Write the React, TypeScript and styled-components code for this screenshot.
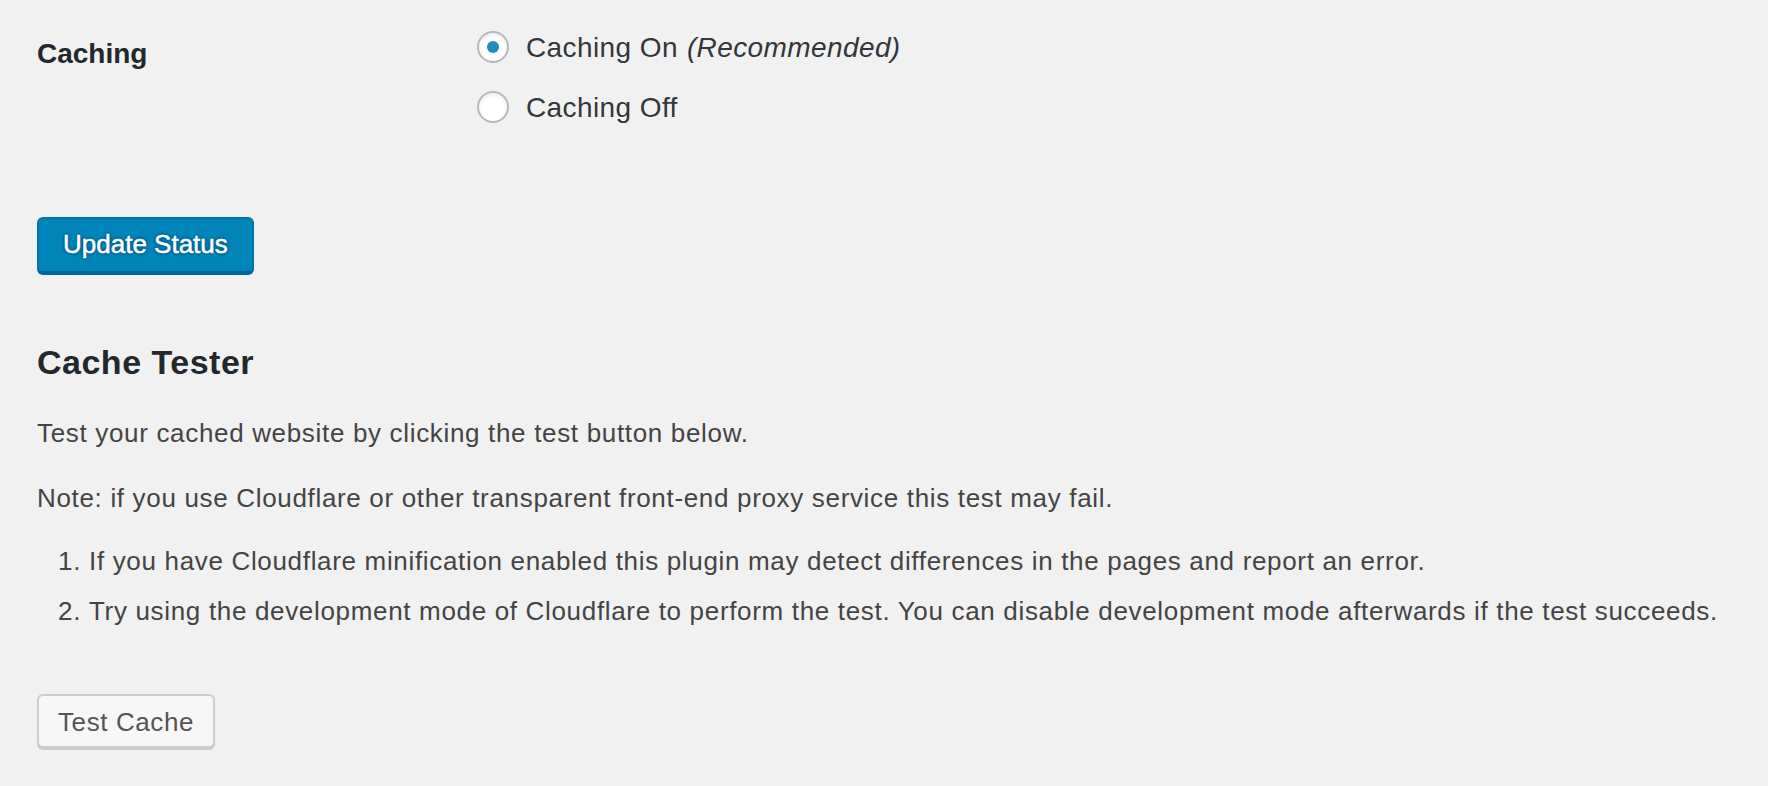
import React, { useState } from 'react';
import styled, { createGlobalStyle } from 'styled-components';

const GlobalStyle = createGlobalStyle`
  html, body {
    margin: 0;
    padding: 0;
    background: #f1f1f1;
  }
  body {
    font-family: 'Liberation Sans', Arial, sans-serif;
    color: #444;
  }
`;

const Page = styled.div`
  padding: 0 37px;
  min-height: 786px;
  box-sizing: border-box;
`;

const FormRow = styled.div`
  display: grid;
  grid-template-columns: 440px 1fr;
  padding-top: 18px;
`;

const RowLabel = styled.div`
  font-size: 28px;
  font-weight: 700;
  line-height: 36px;
  color: #23282d;
  padding-top: 18px;
`;

const OptionList = styled.div`
  display: flex;
  flex-direction: column;
`;

const Option = styled.label`
  display: flex;
  align-items: center;
  height: 60px;
  font-size: 28px;
  line-height: 60px;
  letter-spacing: 0.4px;
  color: #32373c;
  cursor: pointer;

  em {
    margin-left: 9px;
  }
`;

const Radio = styled.input`
  appearance: none;
  box-sizing: border-box;
  width: 32px;
  height: 32px;
  margin: 0 17px 0 0;
  border: 2px solid #b4b9be;
  border-radius: 50%;
  background: #fff;
  box-shadow: inset 0 2px 4px rgba(0, 0, 0, 0.07);
  display: grid;
  place-items: center;
  flex-shrink: 0;
  position: relative;
  top: -1px;

  &:checked::before {
    content: '';
    width: 12px;
    height: 12px;
    border-radius: 50%;
    background: #1e8cbe;
  }
`;

const Button = styled.button<{ $primary?: boolean }>`
  box-sizing: border-box;
  font-family: 'Liberation Sans', Arial, sans-serif;
  font-size: 26px;
  letter-spacing: ${(p) => (p.$primary ? '0' : '0.6px')};
  border-radius: 6px;
  border: 2px solid ${(p) => (p.$primary ? '#0073aa' : '#ccc')};
  border-bottom-color: ${(p) => (p.$primary ? '#006799' : '#ccc')};
  background: ${(p) => (p.$primary ? '#0085ba' : '#f7f7f7')};
  color: ${(p) => (p.$primary ? '#fff' : '#555')};
  text-shadow: ${(p) =>
    p.$primary
      ? '0 -2px 2px #006799, 2px 0 2px #006799, 0 2px 2px #006799, -2px 0 2px #006799'
      : 'none'};
  -webkit-text-stroke: ${(p) => (p.$primary ? '0.5px #fff' : '0')};
  box-shadow: ${(p) => (p.$primary ? '0 2px 0 #006799' : '0 2px 0 #ccc')};
  height: ${(p) => (p.$primary ? '56px' : '54px')};
  line-height: ${(p) => (p.$primary ? '50px' : '46px')};
  padding: ${(p) => (p.$primary ? '0 24px 2px' : '2px 19px 0')};
  cursor: pointer;
  display: block;
`;

const SubmitArea = styled.div`
  margin-top: 79px;
`;

const Heading = styled.h2`
  margin: 67px 0 0;
  font-size: 34px;
  line-height: 44px;
  font-weight: 700;
  letter-spacing: 0.5px;
  color: #23282d;
`;

const Para = styled.p<{ $first?: boolean }>`
  margin: ${(p) => (p.$first ? '30px' : '26px')} 0 0;
  font-size: 26px;
  line-height: 39px;
  letter-spacing: 0.67px;
`;

const List = styled.ol`
  margin: 25px 0 0 52px;
  padding: 0;
  font-size: 26px;
  line-height: 36px;
  letter-spacing: 0.67px;

  li {
    margin-bottom: 14px;
  }
  li:last-child {
    margin-bottom: 0;
  }
`;

const TestArea = styled.div`
  margin-top: 65px;
`;

export default function App() {
  const [caching, setCaching] = useState('on');

  return (
    <Page>
      <GlobalStyle />
      <FormRow>
        <RowLabel>Caching</RowLabel>
        <OptionList>
          <Option>
            <Radio
              type="radio"
              name="caching"
              checked={caching === 'on'}
              onChange={() => setCaching('on')}
            />
            Caching On <em>(Recommended)</em>
          </Option>
          <Option>
            <Radio
              type="radio"
              name="caching"
              checked={caching === 'off'}
              onChange={() => setCaching('off')}
            />
            Caching Off
          </Option>
        </OptionList>
      </FormRow>

      <SubmitArea>
        <Button $primary>Update Status</Button>
      </SubmitArea>

      <Heading>Cache Tester</Heading>
      <Para $first>Test your cached website by clicking the test button below.</Para>
      <Para>
        Note: if you use Cloudflare or other transparent front-end proxy service
        this test may fail.
      </Para>
      <List>
        <li>
          If you have Cloudflare minification enabled this plugin may detect
          differences in the pages and report an error.
        </li>
        <li>
          Try using the development mode of Cloudflare to perform the test. You
          can disable development mode afterwards if the test succeeds.
        </li>
      </List>

      <TestArea>
        <Button>Test Cache</Button>
      </TestArea>
    </Page>
  );
}
